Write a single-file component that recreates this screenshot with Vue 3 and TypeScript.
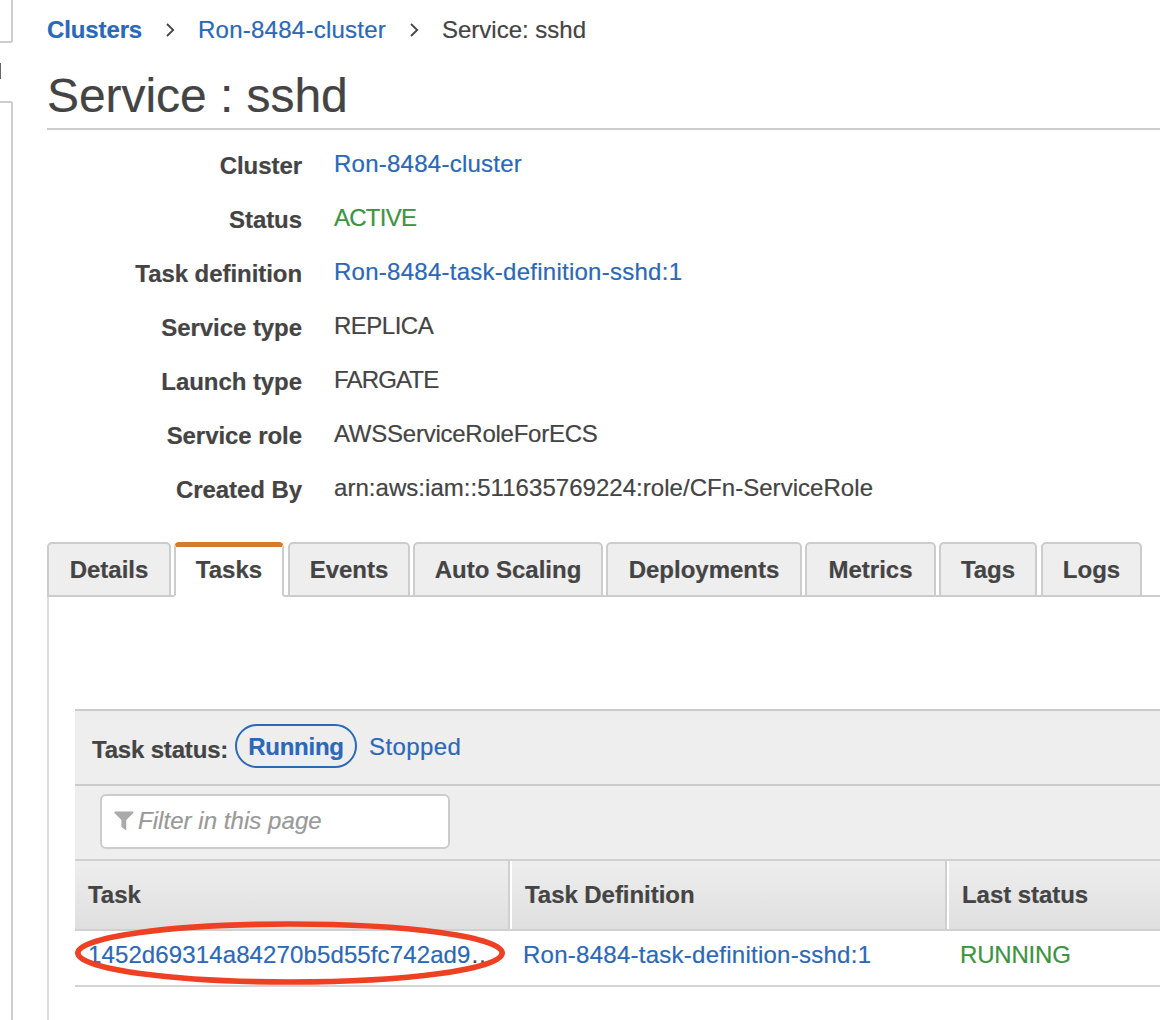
<script setup lang="ts">
import { ref } from 'vue'

interface Field {
  label: string
  value: string
  kind?: 'link' | 'ok'
  tracking: number
}

const fields: Field[] = [
  { label: 'Cluster', value: 'Ron-8484-cluster', kind: 'link', tracking: 0.25 },
  { label: 'Status', value: 'ACTIVE', kind: 'ok', tracking: -0.75 },
  { label: 'Task definition', value: 'Ron-8484-task-definition-sshd:1', kind: 'link', tracking: 0.26 },
  { label: 'Service type', value: 'REPLICA', tracking: -0.5 },
  { label: 'Launch type', value: 'FARGATE', tracking: -0.85 },
  { label: 'Service role', value: 'AWSServiceRoleForECS', tracking: -0.25 },
  { label: 'Created By', value: 'arn:aws:iam::511635769224:role/CFn-ServiceRole', tracking: 0.04 },
]

const tabs = [
  { name: 'Details', width: 124, gap: 3 },
  { name: 'Tasks', width: 110, gap: 4 },
  { name: 'Events', width: 122, gap: 3 },
  { name: 'Auto Scaling', width: 190, gap: 3 },
  { name: 'Deployments', width: 196, gap: 3 },
  { name: 'Metrics', width: 131, gap: 3 },
  { name: 'Tags', width: 98, gap: 4 },
  { name: 'Logs', width: 101, gap: 0 },
]
const active = ref('Tasks')
</script>

<template>
  <div class="page">
    <aside class="rail">
      <div class="rail-top"></div>
      <div class="rail-mark"></div>
      <div class="rail-bottom"></div>
    </aside>
    <main class="main">
      <nav class="crumbs">
        <a class="link strong">Clusters</a>
        <svg class="chev" width="9" height="14" viewBox="0 0 9 14"><path d="M1 1L7.2 7L1 13" /></svg>
        <a class="link">Ron-8484-cluster</a>
        <svg class="chev" width="9" height="14" viewBox="0 0 9 14"><path d="M1 1L7.2 7L1 13" /></svg>
        <span class="here">Service: sshd</span>
      </nav>
      <h1>Service : sshd</h1>
      <dl class="fields">
        <div v-for="f in fields" :key="f.label" class="field">
          <dt>{{ f.label }}</dt>
          <dd :class="f.kind" :style="{ letterSpacing: f.tracking + 'px' }">{{ f.value }}</dd>
        </div>
      </dl>
      <div class="tabs">
        <div
          v-for="t in tabs"
          :key="t.name"
          class="tab"
          :class="{ active: t.name === active }"
          :style="{ width: t.width + 'px', marginRight: t.gap + 'px' }"
          @click="active = t.name"
        >{{ t.name }}</div>
      </div>
      <section class="panel">
        <div class="status">
          <b class="status-label">Task status:</b>
          <a class="pill">Running</a>
          <a class="link stopped">Stopped</a>
        </div>
        <div class="filter">
          <div class="input">
            <svg width="20" height="20" viewBox="0 0 20 20"><path d="M0.5 0.5H19.3V2L12.3 9V19.6L7.4 16V9L0.5 2Z" /></svg>
            <span>Filter in this page</span>
          </div>
        </div>
        <div class="row head">
          <div class="cell c1">Task</div>
          <div class="cell c2">Task Definition</div>
          <div class="cell c3">Last status</div>
        </div>
        <div class="row body">
          <div class="cell c1"><span class="link id">1452d69314a84270b5d55fc742ad9</span><span>…</span>
            <svg class="ring" width="434" height="68" viewBox="0 0 434 68"><ellipse cx="217" cy="34" rx="212.2" ry="29" /></svg>
          </div>
          <div class="cell c2 link">Ron-8484-task-definition-sshd:1</div>
          <div class="cell c3 ok">RUNNING</div>
        </div>
      </section>
    </main>
  </div>
</template>

<style>
body { margin: 0; background: #fff; overflow: hidden; }
</style>
<style scoped>
* { box-sizing: border-box; }
.page {
  display: flex;
  width: 1160px;
  height: 1020px;
  overflow: hidden;
  font: 24px/28px "Liberation Sans", Arial, sans-serif;
  -webkit-text-stroke: 0.2px;
  color: #444;
  white-space: nowrap;
}
.rail { width: 13px; flex: none; display: flex; flex-direction: column; }
.rail-top { height: 43px; border: solid #ccc; border-width: 0 2px 2px 0; border-radius: 0 0 3px 0; }
.rail-mark { width: 1px; height: 16px; margin: 20px 0 22px; background: #666; }
.rail-bottom { flex: 1; border: solid #ccc; border-width: 2px 2px 0 0; border-radius: 0 3px 0 0; }
.main { width: 1113px; margin-left: 34px; flex: none; display: flex; flex-direction: column; }
.link { color: #2a68b8; }
.ok { color: #3d9440; }
.strong { font-weight: bold; letter-spacing: -0.12px; }
.crumbs { display: flex; align-items: center; height: 28px; margin-top: 16px; }
.crumbs .strong { width: 119px; }
.chev { fill: none; stroke: #444; stroke-width: 1.8; margin-right: 23px; }
.crumbs .link:not(.strong) { width: 212px; letter-spacing: 0.25px; }
h1 { margin: 24px 0 0; height: 62px; border-bottom: 2px solid #ccc; font-weight: normal; font-size: 48px; line-height: 55px; letter-spacing: -0.05px; }
.fields { margin: 22px 0 0; height: 378px; }
.field { display: flex; height: 54px; }
dt { width: 255px; text-align: right; font-weight: bold; letter-spacing: -0.06px; }
dd { margin: -2px 0 0 32px; }
.tabs { display: flex; margin-top: 12px; height: 55px; box-shadow: inset 0 -2px #ccc; }
.tab { flex: none; height: 55px; border: 2px solid #ccc; border-radius: 5px 5px 0 0; background: #eee; text-align: center; font-weight: bold; line-height: 52px; }
.tab.active { background: #fff; border-top: 5px solid #d47c2c; border-bottom-color: #fff; line-height: 46px; }
.panel { flex: 1; border-left: 2px solid #ddd; padding: 112px 0 0 26px; display: flex; flex-direction: column; }
.status { flex: none; height: 75px; border-top: 2px solid #ccc; background: #eee; display: flex; padding: 13px 0 0 17px; }
.status-label { width: 143px; line-height: 52px; height: 44px; letter-spacing: -0.18px; }
.pill { width: 122px; height: 44px; border: 2px solid #2a68b8; border-radius: 22px; color: #2a68b8; font-weight: bold; text-align: center; line-height: 41px; letter-spacing: -0.25px; }
.stopped { margin-left: 12px; line-height: 45px; letter-spacing: 0.4px; }
.filter { flex: none; height: 75px; border-top: 2px solid #ccc; background: #eee; padding: 8px 0 0 25px; }
.input { width: 350px; height: 55px; border: 2px solid #ccc; border-radius: 6px; background: #fff; display: flex; align-items: center; padding: 0 0 2px 12px; color: #999; font-style: italic; letter-spacing: 0.05px; }
.input svg { fill: #aaa; margin-right: 4px; }
.row { flex: none; display: flex; }
.head { height: 72px; border: solid #d0d0d0; border-width: 2px 0; background: linear-gradient(#eee, #dfdfdf); font-weight: bold; line-height: 67px; letter-spacing: -0.05px; }
.head .cell { padding-left: 13px; }
.head .c1, .head .c2 { border-right: 2px solid #d0d0d0; box-shadow: 2px 0 #fff; }
.c1 { width: 435px; flex: none; }
.c2 { width: 437px; flex: none; }
.head .c2 { padding-left: 15px; }
.head .c3 { padding-left: 15px; flex: 1; }
.body { height: 56px; border-bottom: 2px solid #d4d4d4; line-height: 47px; }
.body .cell { padding-left: 13px; }
.body .c2 { letter-spacing: 0.26px; }
.body .c3 { letter-spacing: -0.2px; }
.id { letter-spacing: 0.12px; }
.body .c1 { position: relative; }
.ring { position: absolute; left: -2px; top: -12px; fill: none; stroke: #ee4023; stroke-width: 5.6; }
</style>
